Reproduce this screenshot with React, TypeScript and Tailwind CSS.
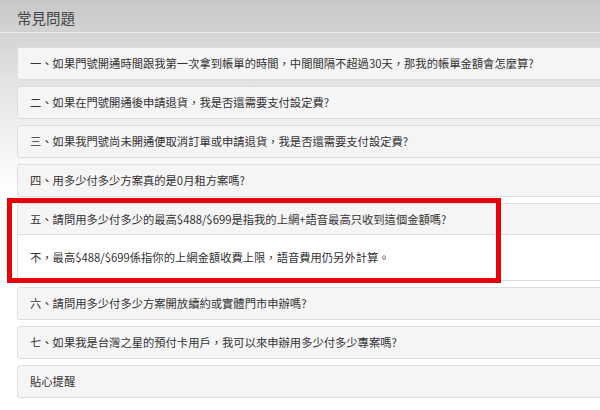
import React from "react";

const questions = [
  "一、如果門號開通時間跟我第一次拿到帳單的時間，中間間隔不超過30天，那我的帳單金額會怎麼算?",
  "二、如果在門號開通後申請退貨，我是否還需要支付設定費?",
  "三、如果我門號尚未開通便取消訂單或申請退貨，我是否還需要支付設定費?",
  "四、用多少付多少方案真的是0月租方案嗎?",
];

const rest = [
  "六、請問用多少付多少方案開放續約或實體門市申辦嗎?",
  "七、如果我是台灣之星的預付卡用戶，我可以來申辦用多少付多少專案嗎?",
  "貼心提醒",
];

const Item = ({ text }: { text: string }) => (
  <div className="w-[620px] h-[33px] flex items-center px-[12px] bg-[#f5f5f5] border border-[#dddddd] rounded-[3px]">
    {text}
  </div>
);

const App = () => {
  return (
    <div
      className="relative w-[600px] h-[410px] overflow-hidden bg-[linear-gradient(to_bottom,#c8c8c8_0px,#e6e6e6_90px,#ffffff_190px)] text-[#333] text-[11.3px]"
      style={{ fontFamily: '"Noto Sans CJK TC", "Noto Sans", sans-serif' }}
    >
      <div className="ml-[17px] h-[32px] pt-[7px] border-b border-[#cfcfcf] text-[14.5px] text-[#444]">
        常見問題
      </div>
      <div className="h-px bg-[#ececec]" />
      <div className="ml-[17px] pt-[14px] flex flex-col gap-[6px]">
        {questions.map((q) => (
          <Item key={q} text={q} />
        ))}
        <div className="w-[620px] border border-[#dddddd] rounded-[3px] bg-white">
          <div className="h-[31px] flex items-center px-[12px] bg-[#f5f5f5] border-b border-[#dddddd]">
            五、請問用多少付多少的最高$488/$699是指我的上網+語音最高只收到這個金額嗎?
          </div>
          <div className="h-[45px] flex items-center px-[12px]">
            不，最高$488/$699係指你的上網金額收費上限，語音費用仍另外計算。
          </div>
        </div>
        {rest.map((q) => (
          <Item key={q} text={q} />
        ))}
      </div>
      <div className="absolute left-[7px] top-[198px] w-[494px] h-[85px] border-[5px] border-[#e8000b]" />
    </div>
  );
};

export default App;
